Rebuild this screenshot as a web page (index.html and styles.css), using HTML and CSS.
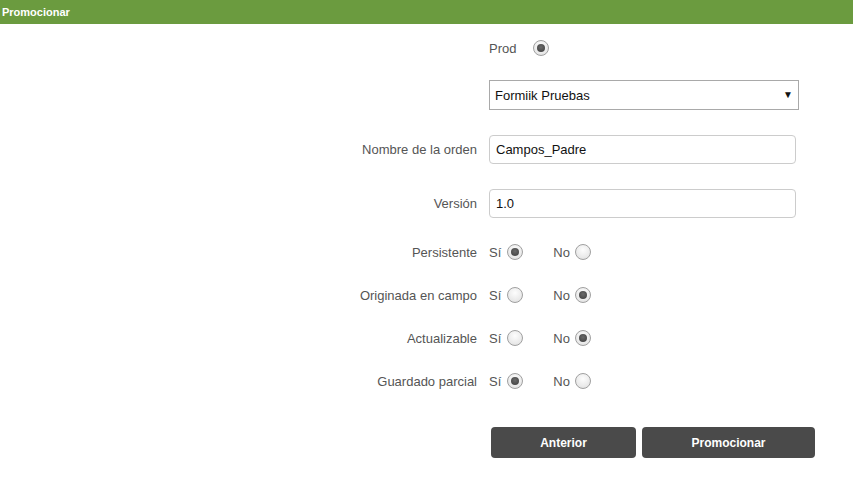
FILE: index.html
```html
<!DOCTYPE html>
<html lang="es">
<head>
<meta charset="utf-8">
<title>Promocionar</title>
<link rel="stylesheet" href="styles.css">
</head>
<body>
<div class="header">Promocionar</div>
<form class="form">
  <div class="row row-prod">
    <div class="label"></div>
    <div class="control">
      <span class="opt-text">Prod</span>
      <span class="radio checked prod-radio"></span>
    </div>
  </div>
  <div class="row row-select">
    <div class="label"></div>
    <div class="control">
      <div class="select-wrap">
        <select class="select"><option>Formiik Pruebas</option></select>
        <span class="arrow">▼</span>
      </div>
    </div>
  </div>
  <div class="row row-input first-input">
    <div class="label">Nombre de la orden</div>
    <div class="control"><input class="input" type="text" value="Campos_Padre"></div>
  </div>
  <div class="row row-input">
    <div class="label">Versión</div>
    <div class="control"><input class="input" type="text" value="1.0"></div>
  </div>
  <div class="row row-radio first-radio">
    <div class="label">Persistente</div>
    <div class="control">
      <span class="opt-text">Sí</span><span class="radio si checked"></span>
      <span class="opt-text no">No</span><span class="radio nor"></span>
    </div>
  </div>
  <div class="row row-radio">
    <div class="label">Originada en campo</div>
    <div class="control">
      <span class="opt-text">Sí</span><span class="radio si"></span>
      <span class="opt-text no">No</span><span class="radio nor checked"></span>
    </div>
  </div>
  <div class="row row-radio">
    <div class="label">Actualizable</div>
    <div class="control">
      <span class="opt-text">Sí</span><span class="radio si"></span>
      <span class="opt-text no">No</span><span class="radio nor checked"></span>
    </div>
  </div>
  <div class="row row-radio">
    <div class="label">Guardado parcial</div>
    <div class="control">
      <span class="opt-text">Sí</span><span class="radio si checked"></span>
      <span class="opt-text no">No</span><span class="radio nor"></span>
    </div>
  </div>
  <div class="row row-buttons">
    <div class="label"></div>
    <div class="buttons">
      <button type="button" class="btn btn-prev">Anterior</button>
      <button type="button" class="btn btn-main">Promocionar</button>
    </div>
  </div>
</form>
</body>
</html>
```
FILE: styles.css
```css
html, body {
  margin: 0;
  padding: 0;
  background: #fff;
  font-family: "Liberation Sans", Arial, sans-serif;
  font-size: 13px;
  color: #555;
}

.header {
  height: 24px;
  line-height: 24px;
  background: #6b9b3f;
  color: #fff;
  font-weight: bold;
  font-size: 11px;
  padding-left: 2px;
}

.form {
  display: flex;
  flex-direction: column;
}

.row {
  display: grid;
  grid-template-columns: 477px 340px;
  column-gap: 12px;
  align-items: center;
}

.label {
  text-align: right;
  color: #555;
  font-size: 13px;
}

.control {
  display: flex;
  align-items: center;
}

.row-prod {
  margin-top: 14px;
  height: 20px;
}

.row-select {
  margin-top: 22px;
  height: 30px;
}

.select-wrap {
  position: relative;
  width: 310px;
  height: 30px;
}

.select {
  appearance: none;
  -webkit-appearance: none;
  width: 100%;
  height: 30px;
  box-sizing: border-box;
  border: 1px solid #a9a9a9;
  border-radius: 0;
  background: #fff;
  font-family: "Liberation Sans", Arial, sans-serif;
  font-size: 13px;
  color: #111;
  padding: 0 5px;
}

.arrow {
  position: absolute;
  right: 6px;
  top: 9px;
  font-size: 10px;
  color: #111;
  pointer-events: none;
}

.row-input {
  margin-top: 25px;
  height: 29px;
}

.input {
  width: 307px;
  height: 29px;
  box-sizing: border-box;
  border: 1px solid #ccc;
  border-radius: 4px;
  padding: 0 6px;
  font-family: "Liberation Sans", Arial, sans-serif;
  font-size: 13px;
  color: #111;
  outline: none;
}

.row-radio {
  margin-top: 23px;
  height: 20px;
}

.first-radio {
  margin-top: 24px;
}

.opt-text {
  color: #555;
  font-size: 13px;
}

.opt-text.no {
  margin-left: 30px;
}

.radio {
  display: inline-block;
  box-sizing: border-box;
  width: 16px;
  height: 16px;
  border-radius: 50%;
  border: 1px solid #a0a0a0;
  background: radial-gradient(circle at 50% 35%, #fdfdfd 0%, #ebebeb 60%, #dcdcdc 100%);
  position: relative;
}

.radio.prod-radio {
  margin-left: 17px;
}

.radio.si {
  margin-left: 6px;
}

.radio.nor {
  margin-left: 5px;
}

.radio.checked::after {
  content: "";
  position: absolute;
  left: 3px;
  top: 3px;
  width: 8px;
  height: 8px;
  border-radius: 50%;
  background: radial-gradient(circle at 50% 40%, #6a6a6a 0%, #3c3c3c 100%);
}

.row-buttons {
  margin-top: 36px;
  height: 31px;
}

.buttons {
  display: flex;
  gap: 6px;
  padding-left: 2px;
}

.btn {
  flex-shrink: 0;
  height: 31px;
  border: none;
  border-radius: 4px;
  background: #4a4a4a;
  color: #fff;
  font-family: "Liberation Sans", Arial, sans-serif;
  font-size: 12px;
  font-weight: bold;
  padding: 0;
}

.btn-prev {
  width: 145px;
}

.btn-main {
  width: 173px;
}
```
